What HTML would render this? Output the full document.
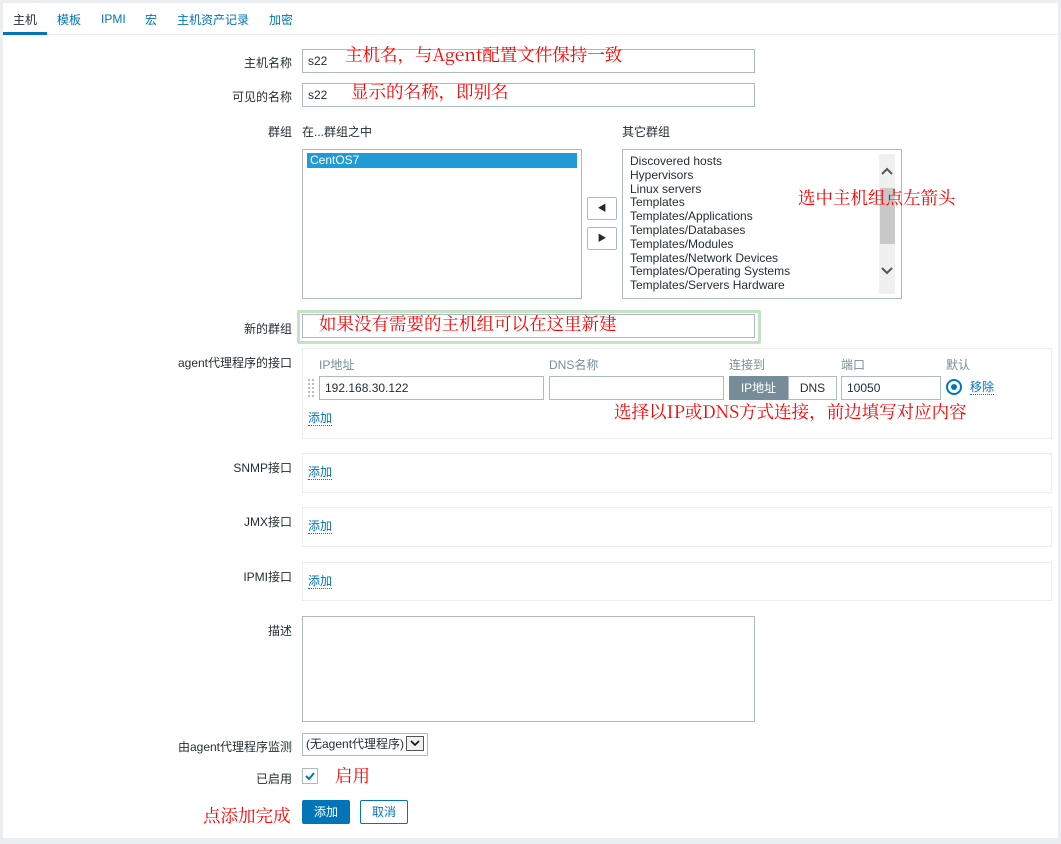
<!DOCTYPE html><html><head><meta charset="utf-8"><style>
body{margin:0;width:1061px;height:844px;background:#ebeef0;font-family:"Liberation Sans","Noto Sans CJK SC",sans-serif;font-size:12px;color:#1f2c33;position:relative;overflow:hidden}
.a{position:absolute}
#panel{left:3px;top:3px;width:1055px;height:835px;background:#fff}
.lbl{position:absolute;right:769px;text-align:right;white-space:nowrap}
.in{position:absolute;border:1px solid #acbbc2;background:#fff;box-sizing:border-box;padding:0 5px;line-height:22px}
.box{position:absolute;border:1px solid #ebeef0;box-sizing:border-box}
.lnk{position:absolute;color:#0275b8;border-bottom:1px dotted #0275b8;line-height:14px}
.red{position:absolute;color:#f00;font-family:"Noto Serif CJK SC","Liberation Serif",serif;font-size:17.5px;white-space:nowrap}
.hd{position:absolute;color:#768d99}
</style></head><body>
<div class="a" id="panel"></div>
<div class="a" style="left:3px;top:34px;width:1055px;height:1px;background:#ebeef0"></div>
<div class="a" style="left:3px;top:32px;width:44px;height:3px;background:#0275b8"></div>
<div class="a" style="left:13px;top:11px;">主机</div>
<div class="a" style="left:57px;top:11px;color:#0275b8">模板</div>
<div class="a" style="left:101px;top:11px;color:#0275b8;line-height:16px">IPMI</div>
<div class="a" style="left:145px;top:11px;color:#0275b8">宏</div>
<div class="a" style="left:177px;top:11px;color:#0275b8">主机资产记录</div>
<div class="a" style="left:269px;top:11px;color:#0275b8">加密</div>

<div class="lbl" style="top:54px">主机名称</div>
<div class="in" style="left:302px;top:49px;width:453px;height:24px">s22</div>
<div class="lbl" style="top:88px">可见的名称</div>
<div class="in" style="left:302px;top:83px;width:453px;height:24px">s22</div>
<div class="lbl" style="top:123px">群组</div>
<div class="a" style="left:302px;top:123px">在...群组之中</div>
<div class="a" style="left:622px;top:123px">其它群组</div>
<div class="in" style="left:302px;top:149px;width:280px;height:150px;padding:3px 4px;line-height:14px">
<div style="background:#229ad6;color:#fff;height:15px;line-height:14px;padding-left:3px">CentOS7</div></div>
<div class="in" style="left:587px;top:197px;width:30px;height:23px;border-radius:2px;text-align:center;font-size:9px;line-height:21px">◀</div>
<div class="in" style="left:587px;top:227px;width:30px;height:23px;border-radius:2px;text-align:center;font-size:9px;line-height:21px">▶</div>
<div class="in" style="left:622px;top:149px;width:280px;height:150px;padding:5px 7px;line-height:13.8px">Discovered hosts<br>Hypervisors<br>Linux servers<br>Templates<br>Templates/Applications<br>Templates/Databases<br>Templates/Modules<br>Templates/Network Devices<br>Templates/Operating Systems<br>Templates/Servers Hardware</div>
<div class="a" style="left:879px;top:154px;width:16px;height:140px;background:#f0f0f0"></div>
<div class="a" style="left:880px;top:188px;width:15px;height:56px;background:#c8c8c8"></div>
<svg class="a" style="left:881px;top:167px" width="12" height="8"><path d="M1 7L6 2L11 7" stroke="#555" stroke-width="2" fill="none"/></svg>
<svg class="a" style="left:881px;top:267px" width="12" height="8"><path d="M1 1L6 6L11 1" stroke="#555" stroke-width="2" fill="none"/></svg>

<div class="lbl" style="top:320px">新的群组</div>
<div class="a" style="left:297px;top:310px;width:458px;height:28px;border:3px solid #c5e2c5;border-radius:2px"></div>
<div class="in" style="left:302px;top:314px;width:453px;height:24px"></div>
<div class="lbl" style="top:354px">agent代理程序的接口</div>
<div class="box" style="left:302px;top:348px;width:750px;height:91px"></div>
<div class="hd" style="left:319px;top:356px">IP地址</div>
<div class="hd" style="left:549px;top:356px">DNS名称</div>
<div class="hd" style="left:729px;top:356px">连接到</div>
<div class="hd" style="left:841px;top:356px">端口</div>
<div class="hd" style="left:946px;top:356px">默认</div>
<div class="a" style="left:308px;top:379px;width:6px;height:18px;background:repeating-linear-gradient(90deg,#bbb 0 2px,transparent 2px 4px);-webkit-mask:repeating-linear-gradient(#000 0 2px,transparent 2px 4px)"></div>
<div class="in" style="left:319px;top:376px;width:225px;height:24px">192.168.30.122</div>
<div class="in" style="left:549px;top:376px;width:175px;height:24px"></div>
<div class="a" style="left:729px;top:376px;width:59px;height:24px;background:#768d99;color:#fff;text-align:center;line-height:24px">IP地址</div>
<div class="in" style="left:788px;top:376px;width:49px;height:24px;text-align:center">DNS</div>
<div class="in" style="left:841px;top:376px;width:100px;height:24px">10050</div>
<div class="a" style="left:946px;top:379px;width:12px;height:12px;border:2px solid #0275b8;border-radius:50%"></div>
<div class="a" style="left:951px;top:384px;width:6px;height:6px;background:#0275b8;border-radius:50%"></div>
<div class="lnk" style="left:970px;top:380px">移除</div>
<div class="lnk" style="left:308px;top:411px">添加</div>

<div class="lbl" style="top:459px">SNMP接口</div>
<div class="box" style="left:302px;top:453px;width:750px;height:40px"></div>
<div class="lnk" style="left:308px;top:465px">添加</div>
<div class="lbl" style="top:513px">JMX接口</div>
<div class="box" style="left:302px;top:507px;width:750px;height:40px"></div>
<div class="lnk" style="left:308px;top:519px">添加</div>
<div class="lbl" style="top:568px">IPMI接口</div>
<div class="box" style="left:302px;top:562px;width:750px;height:39px"></div>
<div class="lnk" style="left:308px;top:574px">添加</div>

<div class="lbl" style="top:622px">描述</div>
<div class="in" style="left:302px;top:616px;width:453px;height:106px"></div>
<div class="lbl" style="top:738px">由agent代理程序监测</div>
<div class="in" style="left:302px;top:733px;width:126px;height:23px;padding:0 3px;line-height:21px">(无agent代理程序)</div>
<div class="a" style="left:406px;top:736px;width:18px;height:15px;border:1px solid #555;background:#f0f0f0;box-sizing:border-box"><svg width="16" height="13" style="display:block"><path d="M4 4L8 8L12 4" stroke="#111" stroke-width="1.6" fill="none"/></svg></div>
<div class="lbl" style="top:770px">已启用</div>
<div class="in" style="left:302px;top:768px;width:16px;height:16px"><svg width="14" height="14" style="position:absolute;left:0;top:0"><path d="M3 7L6 10L11 4" stroke="#0275b8" stroke-width="2" fill="none"/></svg></div>
<div class="a" style="left:302px;top:800px;width:48px;height:24px;background:#0275b8;border-radius:2px;color:#fff;text-align:center;line-height:24px">添加</div>
<div class="a" style="left:360px;top:800px;width:48px;height:24px;border:1px solid #0275b8;box-sizing:border-box;border-radius:2px;color:#0275b8;text-align:center;line-height:22px">取消</div>

<div class="red" style="left:345px;top:42px">主机名，与Agent配置文件保持一致</div>
<div class="red" style="left:351px;top:79px">显示的名称，即别名</div>
<div class="red" style="left:798px;top:185px">选中主机组点左箭头</div>
<div class="red" style="left:319px;top:311px">如果没有需要的主机组可以在这里新建</div>
<div class="red" style="left:614px;top:399px">选择以IP或DNS方式连接，前边填写对应内容</div>
<div class="red" style="left:335px;top:763px">启用</div>
<div class="red" style="left:203px;top:803px">点添加完成</div>
</body></html>
